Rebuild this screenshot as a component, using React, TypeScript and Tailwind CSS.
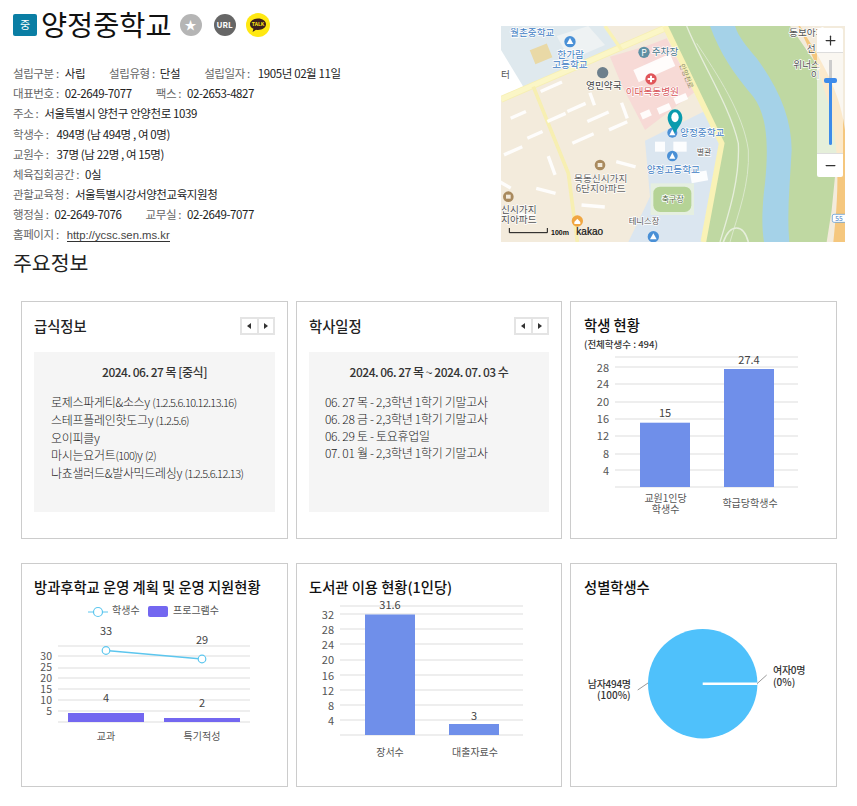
import React from "react";
import { Plus, Minus } from "lucide-react";

const FONT = "'Noto Sans CJK KR','Noto Sans',sans-serif";

function Pair({ k, v, gap = 0, mr = 0 }: { k: string; v: React.ReactNode; gap?: number; mr?: number }) {
  return (
    <span className="inline-flex whitespace-nowrap" style={{ marginRight: mr }}>
      <span className="text-[#666]">{k}</span>
      <span className="text-[#222]" style={{ marginLeft: gap }}>{v}</span>
    </span>
  );
}

function Row({ children }: { children: React.ReactNode }) {
  return <div className="flex h-[20.2px] items-center">{children}</div>;
}

function MapView() {
  const t = (x: number, y: number, s: string, c: string, size = 29, anchor: "start" | "middle" = "start") => (
    <text x={x} y={y} fill={c} fontSize={size} textAnchor={anchor} fontFamily={FONT} stroke="#fff" strokeWidth={4} paintOrder="stroke">{s}</text>
  );
  const blue = "#3f80c4";
  const dark = "#555";
  const builds: [number, number, number, number, number][] = [
    [150, 240, 70, 10, -24],[170, 330, 60, 10, -24],[230, 300, 60, 10, -24],[290, 330, 70, 10, -24],[245, 395, 70, 10, -24],
    [355, 355, 60, 10, -24],[60, 320, 50, 10, -24],[40, 430, 60, 10, -24],[110, 380, 50, 10, -24],[380, 450, 60, 10, 15],
    [170, 440, 10, 60, -20],[390, 280, 10, 50, -20],[295, 250, 10, 40, -20],[275, 580, 70, 10, 5],[140, 530, 60, 10, 15],
    [450, 310, 30, 20, -24],[500, 295, 40, 20, -24],[550, 265, 40, 20, -24],[430, 180, 120, 40, -24],[550, 395, 40, 30, 0],
    [495, 395, 30, 30, 0],[600, 490, 50, 30, -10],[85, 605, 50, 10, 10],[30, 510, 40, 10, 30],
  ];
  return (
    <svg className="block h-[216px] w-[344px]" viewBox="33 48 1032 648">
      <rect x="33" y="48" width="1032" height="648" fill="#f3ebdc" />
      <polygon points="33,48 340,48 400,110 125,225 33,260" fill="#dfe9ee" />
      <polygon points="33,120 100,230 33,265" fill="#fff" />
      <polygon points="200,78 295,48 345,105 240,150" fill="#eef2f3" />
      <rect x="125" y="110" width="55" height="45" fill="#e9d9a6" transform="rotate(-22 150 130)" />
      <polygon points="360,140 530,90 615,245 465,360 395,225" fill="#f7dad6" />
      <polygon points="440,120 530,85 555,130 470,170" fill="#f6d8d6" />
      <polygon points="465,392 640,305 695,400 640,696 415,696 480,560" fill="#dbe6f0" />
      <polygon points="525,48 900,48 1005,200 1045,400 1025,600 1010,696 640,696 695,400" fill="#bfd8a2" />
      <path d="M660 48 C690 130 730 190 790 260 C835 320 835 420 825 520 C815 600 815 650 822 696 L898 696 C890 610 900 520 905 420 C905 330 870 240 800 145 C770 110 745 80 735 48 Z" fill="#a5d2e8" />
      <path d="M590 48 C640 170 720 290 745 400 C750 500 720 600 690 696" fill="none" stroke="#e6eedb" strokeWidth="4" />
      <path d="M620 100 C680 190 760 310 775 420 C780 520 745 610 720 696" fill="none" stroke="#dbe8cc" strokeWidth="3" />
      <path d="M700 696 C720 640 760 640 775 696" fill="none" stroke="#e6eedb" strokeWidth="5" />
      <path d="M930 48 C980 130 1040 220 1060 330 L1065 360 L1065 696 L1030 696 C1050 520 1050 380 1000 230 C980 160 950 100 925 48 Z" fill="#f5c77e" />
      <polygon points="1040,48 1065,48 1065,300 1020,170" fill="#f3ebdc" />
      <path d="M33 268 L530 52" stroke="#f6efb4" strokeWidth="20" />
      <path d="M33 268 L530 52" stroke="#fbf6c6" strokeWidth="15" />
      <path d="M130 230 L235 490 L262 696" fill="none" stroke="#f7efb2" strokeWidth="11" />
      <path d="M525 48 L695 400 L640 696" fill="none" stroke="#f9f2b6" strokeWidth="17" />
      <path d="M345 48 L395 120" stroke="#f9f2b6" strokeWidth="10" />
      {builds.map(([x, y, w, h, r], i) => (
        <rect key={i} x={x} y={y} width={w} height={h} fill="#fff" opacity={0.9} transform={`rotate(${r} ${x} ${y})`} />
      ))}
      <rect x="482" y="520" width="130" height="95" fill="#e5efe0" />
      <rect x="490" y="530" width="114" height="76" rx="20" fill="#b5d396" />
      <circle cx="240" cy="95" r="17" fill="#4a90d6" />
      <polygon points="240,84 250,102 230,102" fill="#fff" />
      <circle cx="462" cy="127" r="17" fill="#5d8fa3" />
      <text x="462" y="137" fontSize="26" fill="#fff" textAnchor="middle" fontFamily={FONT}>P</text>
      <circle cx="338" cy="188" r="17" fill="#6d7f8c" />
      <circle cx="483" cy="207" r="17" fill="#e0555a" />
      <path d="M473 207 h20 M483 197 v20" stroke="#fff" strokeWidth="6" />
      <circle cx="547" cy="368" r="15" fill="#4a90d6" />
      <polygon points="547,358 556,376 538,376" fill="#fff" />
      <circle cx="547" cy="438" r="16" fill="#4a90d6" />
      <polygon points="547,428 556,446 538,446" fill="#fff" />
      <circle cx="490" cy="680" r="17" fill="#4a90d6" />
      <polygon points="490,670 500,688 480,688" fill="#fff" />
      <circle cx="330" cy="465" r="16" fill="#a98a5e" />
      <rect x="323" y="459" width="14" height="12" fill="#f3ebdc" />
      <circle cx="55" cy="560" r="16" fill="#a98a5e" />
      <rect x="48" y="554" width="14" height="12" fill="#f3ebdc" />
      <circle cx="262" cy="633" r="17" fill="#f0a640" />
      <path d="M253 636 L262 626 L271 636 V642 H253 Z" fill="#fff" />
      {t(60, 78, "월촌중학교", blue)}
      {t(242, 143, "한가람", blue, 29, "middle")}
      {t(240, 175, "고등학교", blue, 29, "middle")}
      {t(485, 135, "주차장", "#47748a")}
      {t(33, 203, "터", dark)}
      {t(288, 238, "영민약국", "#444")}
      {t(407, 256, "이대목동병원", "#d9575c")}
      {t(570, 378, "양정중학교", blue)}
      {t(620, 436, "별관", dark, 24)}
      {t(470, 488, "양정고등학교", blue)}
      {t(332, 515, "목동신시가지", "#666", 29, "middle")}
      {t(332, 545, "6단지아파드", "#666", 29, "middle")}
      {t(515, 575, "축구장", "#4f6b3e", 24)}
      {t(33, 610, "신시가지", "#555")}
      {t(33, 640, "지아파드", "#555")}
      {t(416, 641, "테니스장", "#555", 25)}
      {t(897, 77, "동보아파", "#555")}
      {t(950, 125, "선", "#555")}
      {t(910, 175, "위너스", "#555")}
      {t(962, 205, "이", "#555")}
      <text x="0" y="0" fontSize="21" fill="#8b8b6a" fontFamily={FONT} transform="translate(568 165) rotate(68)">안양천로</text>
      <rect x="1027" y="613" width="42" height="24" rx="5" fill="#fff" stroke="#4a90d6" strokeWidth="2" />
      <text x="1047" y="632" fontSize="20" fill="#3f80c4" textAnchor="middle" fontFamily={FONT}>55</text>
      <path d="M555 370 C545 350 532 340 533 322 A22 24 0 0 1 577 322 C578 340 565 350 555 370 Z" fill="#0a9bae" />
      <ellipse cx="555" cy="322" rx="11" ry="15" fill="#fff" />
      <path d="M58 654 V668 H172 V654" fill="none" stroke="#111" strokeWidth="3" />
      <text x="183" y="674" fontSize="21" fontWeight="700" fill="#111" fontFamily="'Liberation Sans',sans-serif">100m</text>
      <text x="259" y="675" fontSize="30" fontWeight="400" fill="#111" fontFamily="'Liberation Sans',sans-serif" stroke="#111" strokeWidth="0.6">kakao</text>
    </svg>
  );
}

function MapControls() {
  return (
    <div className="absolute left-[316px] top-[2px] flex h-[149px] w-[26px] flex-col overflow-hidden rounded-[2px]">
      <div className="flex h-[25px] items-center justify-center border-b border-[#ddd] bg-white">
        <Plus size={15} strokeWidth={2} className="text-[#333]" />
      </div>
      <div className="relative flex-1 bg-white/60">
        <div className="absolute left-[11.5px] top-[7px] h-[20px] w-[3px] bg-[#ccc]" />
        <div className="absolute left-[11.5px] top-[26px] h-[66px] w-[3px] rounded-b bg-[#3d8bea]" />
        <div className="absolute left-[6.5px] top-[25px] h-[5px] w-[13px] rounded-[2px] bg-[#3d8bea]" />
      </div>
      <div className="flex h-[24px] items-center justify-center border-t border-[#ddd] bg-white">
        <Minus size={15} strokeWidth={2} className="text-[#333]" />
      </div>
    </div>
  );
}

function Arrows() {
  return (
    <div className="flex h-[18px] w-[35px] border-2 border-[#e4e4e4] bg-white">
      <div className="flex flex-1 items-center justify-center border-r-2 border-[#e4e4e4]">
        <svg width="4" height="6" viewBox="0 0 4 6"><polygon points="4,0 4,6 0,3" fill="#333" /></svg>
      </div>
      <div className="flex flex-1 items-center justify-center">
        <svg width="4" height="6" viewBox="0 0 4 6"><polygon points="0,0 0,6 4,3" fill="#333" /></svg>
      </div>
    </div>
  );
}

function Card({ children, h }: { children: React.ReactNode; h: string }) {
  return <div className={`border border-[#ccc] bg-white ${h}`}>{children}</div>;
}

function Sm({ children }: { children: React.ReactNode }) {
  return <span className="text-[11px] tracking-[-0.6px]">{children}</span>;
}

function ListCard({ title, head, lines, pl }: { title: string; head: string; lines: React.ReactNode[]; pl: string }) {
  return (
    <Card h="h-[238px]">
      <div className="flex h-[50px] items-center justify-between pb-[3px] pl-[12px] pr-[12px]">
        <span className="text-[14.3px] font-medium text-[#222]">{title}</span>
        <Arrows />
      </div>
      <div className="mx-[12px] h-[160px] bg-[#f5f5f5] pt-[10px]">
        <div className="text-center text-[12px] font-medium leading-[20px] tracking-[-0.5px] text-[#333]">{head}</div>
        <div className={`mt-[11px] text-[12px] font-light leading-[17px] tracking-[-0.3px] text-[#222] ${pl}`}>
          {lines.map((l, i) => (<div key={i} className="whitespace-nowrap">{l}</div>))}
        </div>
      </div>
    </Card>
  );
}

type Bar = { x0: number; x1: number; top: number; label: string; ly: number; lx: number };

function Bars({ ox, oy, h, grid, ticks, x0, x1, base, bars, cats }: {
  ox: number; oy: number; h: number; grid: number[]; ticks: [string, number][]; x0: number; x1: number; base: number; bars: Bar[];
  cats: [string, number, number][];
}) {
  return (
    <svg className="block w-[265px] overflow-visible" style={{ height: h }} viewBox={`${ox} ${oy} 265 ${h}`} fontFamily={FONT}>
      {grid.map((y) => (<line key={y} x1={x0} x2={x1} y1={y} y2={y} stroke="#ddd" strokeWidth="1" />))}
      {bars.map((b) => (<rect key={b.label} x={b.x0} y={b.top} width={b.x1 - b.x0} height={base - b.top} fill="#6f8fea" />))}
      {bars.map((b) => (<text key={b.label} x={b.lx} y={b.ly} fontSize="11" fill="#444" textAnchor="middle">{b.label}</text>))}
      {ticks.map(([s, y]) => (<text key={s} x={x0 - 6} y={y + 4} fontSize="11" fill="#555" textAnchor="end">{s}</text>))}
      {cats.map(([s, x, y]) => (<text key={s + y} x={x} y={y + 3.5} fontSize="10" fill="#555" textAnchor="middle">{s}</text>))}
    </svg>
  );
}

function ChartTitle({ children, pl = "pl-[12px]" }: { children: React.ReactNode; pl?: string }) {
  return <div className={`whitespace-nowrap pt-[12px] text-[14.3px] font-medium leading-[22px] text-[#111] ${pl}`}>{children}</div>;
}

function ComboChart() {
  const grid = [646, 656, 668, 678, 689, 700, 711, 722];
  return (
    <svg className="block h-[172px] w-[265px]" viewBox="22 598 265 172" fontFamily={FONT}>
      <line x1="88" x2="108" y1="612" y2="612" stroke="#5cc6ee" strokeWidth="1" />
      <circle cx="98" cy="612" r="4.5" fill="#fff" stroke="#5cc6ee" strokeWidth="1.2" />
      <text x="112" y="614" fontSize="10" fill="#555">학생수</text>
      <rect x="148" y="606" width="20" height="11" rx="2" fill="#7367f0" />
      <text x="173" y="614" fontSize="10" fill="#555">프로그램수</text>
      {grid.map((y) => (<line key={y} x1="58" x2="250" y1={y} y2={y} stroke="#ddd" strokeWidth="1" />))}
      <rect x="68" y="713" width="76" height="9" fill="#7367f0" />
      <rect x="164" y="718" width="76" height="4" fill="#7367f0" />
      <line x1="106" y1="650.5" x2="202" y2="659" stroke="#5cc6ee" strokeWidth="1.4" />
      <circle cx="106" cy="650.5" r="3.8" fill="#fff" stroke="#5cc6ee" strokeWidth="1.2" />
      <circle cx="202" cy="659" r="3.8" fill="#fff" stroke="#5cc6ee" strokeWidth="1.2" />
      {([["33", 106, 635], ["29", 202, 644], ["4", 106, 702], ["2", 202, 707]] as [string, number, number][]).map(([s, x, y]) => (
        <text key={s} x={x} y={y} fontSize="11" fill="#444" textAnchor="middle">{s}</text>
      ))}
      {([["30", 660], ["25", 671], ["20", 682], ["15", 693], ["10", 704], ["5", 715]] as [string, number][]).map(([s, y]) => (
        <text key={s} x="52" y={y} fontSize="10.5" fill="#555" textAnchor="end">{s}</text>
      ))}
      <text x="106" y="740" fontSize="10" fill="#555" textAnchor="middle">교과</text>
      <text x="202" y="740" fontSize="10" fill="#555" textAnchor="middle">특기적성</text>
    </svg>
  );
}

function PieChart() {
  return (
    <svg className="block h-[172px] w-[265px]" viewBox="571 598 265 172" fontFamily={FONT}>
      <circle cx="702.7" cy="683.7" r="54.7" fill="#4fc1fb" />
      <line x1="702.7" x2="757.4" y1="683.7" y2="683.7" stroke="#fff" strokeWidth="2.5" />
      <polyline points="757,683.7 766.7,675" fill="none" stroke="#999" strokeWidth="1" />
      <polyline points="648,683 637.7,690" fill="none" stroke="#999" strokeWidth="1" />
      <text x="773" y="674" fontSize="10" fontWeight="500" fill="#333" letterSpacing="-0.3">여자0명</text>
      <text x="773" y="686" fontSize="10" fontWeight="500" fill="#333">(0%)</text>
      <text x="630.7" y="688" fontSize="10" fontWeight="500" fill="#333" textAnchor="end" letterSpacing="-0.3">남자494명</text>
      <text x="630.7" y="699" fontSize="10" fontWeight="500" fill="#333" textAnchor="end">(100%)</text>
    </svg>
  );
}

export default function App() {
  return (
    <div className="h-[806px] w-[857px] overflow-hidden bg-white" style={{ fontFamily: FONT }}>
      <div className="flex h-[242px] pl-[13px]">
        <div className="w-[488px]">
          <div className="flex h-[50px] items-center pb-[1px]">
            <div className="mr-[4px] flex h-[22px] w-[24px] items-center justify-center rounded-[2px] bg-[#0a7ea4] text-[11px] text-white">중</div>
            <span className="text-[28.4px] font-normal leading-none text-[#111]">양정중학교</span>
            <div className="ml-[8px] flex h-[22px] w-[22px] items-center justify-center rounded-full bg-[#b5b5b5] text-[12px] leading-none text-white">★</div>
            <div className="ml-[12px] flex h-[22px] w-[22px] items-center justify-center rounded-full bg-[#666] text-[8px] font-bold leading-none text-white">URL</div>
            <div className="ml-[10px] h-[24px] w-[24px]">
              <svg viewBox="0 0 24 24" className="h-[24px] w-[24px]">
                <circle cx="12" cy="12" r="12" fill="#ffe812" />
                <path d="M12 5.500C7.400 5.500 4 8 4 11.200c0 2 1.400 3.600 3.400 4.600L6.600 19l3.400-2.300c.7.1 1.300.2 2 .2 4.600 0 8-2.500 8-5.700S16.600 5.500 12 5.500Z" fill="#3b1e1e" />
                <text x="12" y="13" fontSize="5" fontWeight="700" fill="#ffe812" textAnchor="middle">TALK</text>
              </svg>
            </div>
          </div>
          <div className="mt-[13px] text-[11.5px] leading-[20px] tracking-[-0.4px]">
            <Row><Pair k="설립구분 :" v="사립" gap={6} mr={24} /><Pair k="설립유형 :" v="단설" gap={5} mr={24} /><Pair k="설립일자 :" v="1905년 02월 11일" gap={8} /></Row>
            <Row><Pair k="대표번호 :" v="02-2649-7077" gap={6} mr={24} /><Pair k="팩스 :" v="02-2653-4827" gap={6} /></Row>
            <Row><Pair k="주소 :" v="서울특별시 양천구 안양천로 1039" gap={6} /></Row>
            <Row><Pair k="학생수 :" v="494명 (남 494명 , 여 0명)" gap={8} /></Row>
            <Row><Pair k="교원수 :" v="37명 (남 22명 , 여 15명)" gap={8} /></Row>
            <Row><Pair k="체육집회공간 :" v="0실" gap={6} /></Row>
            <Row><Pair k="관할교육청 :" v="서울특별시강서양천교육지원청" gap={6} /></Row>
            <Row><Pair k="행정실 :" v="02-2649-7076" gap={6} mr={24} /><Pair k="교무실 :" v="02-2649-7077" gap={6} /></Row>
            <Row><Pair k="홈페이지 :" v={<span className="border-b border-[#333] font-['Liberation_Sans',sans-serif] text-[11.3px] tracking-normal text-[#444]">http://ycsc.sen.ms.kr</span>} gap={8} /></Row>
          </div>
        </div>
        <div className="relative mt-[26px] h-[216px] w-[344px]">
          <MapView />
          <MapControls />
        </div>
      </div>
      <div className="flex h-[40px] items-center pl-[13px] text-[20.5px] leading-none text-[#222]">주요정보</div>
      <div className="ml-[21px] mt-[19px] grid w-[816px] grid-cols-[267px_266px_267px] gap-x-[8px] gap-y-[24px]">
        <ListCard
          title="급식정보"
          head="2024. 06. 27 목 [중식]"
          pl="pl-[17px]"
          lines={[
            <>로제스파게티&소스y <Sm>(1.2.5.6.10.12.13.16)</Sm></>,
            <>스테프플레인핫도그y <Sm>(1.2.5.6)</Sm></>,
            <>오이피클y</>,
            <>마시는요거트<Sm>(100)</Sm>y <Sm>(2)</Sm></>,
            <>나쵸샐러드&발사믹드레싱y <Sm>(1.2.5.6.12.13)</Sm></>,
          ]}
        />
        <ListCard
          title="학사일정"
          head="2024. 06. 27 목 ~ 2024. 07. 03 수"
          pl="pl-[16px]"
          lines={["06. 27 목 - 2,3학년 1학기 기말고사", "06. 28 금 - 2,3학년 1학기 기말고사", "06. 29 토 - 토요휴업일", "07. 01 월 - 2,3학년 1학기 기말고사"]}
        />
        <Card h="h-[238px]">
          <ChartTitle pl="pl-[13px]">학생 현황</ChartTitle>
          <div className="pl-[13px] text-[9.5px] font-medium leading-[16px] text-[#333]">(전체학생수 : 494)</div>
          <Bars
            ox={571} oy={352} h={170}
            grid={[357, 367, 384, 402, 419, 436, 454, 470, 487]}
            ticks={[["28", 368], ["24", 384], ["20", 402], ["16", 419], ["12", 436], ["8", 454], ["4", 471]]}
            x0={615} x1={798} base={487}
            bars={[
              { x0: 640, x1: 690, top: 422.7, label: "15", lx: 665, ly: 417 },
              { x0: 724, x1: 774, top: 369, label: "27.4", lx: 749, ly: 364 },
            ]}
            cats={[["교원1인당", 665.6, 498], ["학생수", 665.6, 509], ["학급당학생수", 750, 503]]}
          />
        </Card>
        <Card h="h-[224px]">
          <ChartTitle>방과후학교 운영 계획 및 운영 지원현황</ChartTitle>
          <ComboChart />
        </Card>
        <Card h="h-[224px]">
          <ChartTitle>도서관 이용 현황(1인당)</ChartTitle>
          <Bars
            ox={297} oy={598} h={172}
            grid={[606, 614, 629, 644, 660, 675, 690, 705, 720, 735]}
            ticks={[["32", 615], ["28", 630], ["24", 645], ["20", 660], ["16", 676], ["12", 691], ["8", 706], ["4", 721]]}
            x0={340} x1={523} base={735}
            bars={[
              { x0: 365, x1: 415, top: 614.5, label: "31.6", lx: 390, ly: 609 },
              { x0: 449, x1: 499, top: 724, label: "3", lx: 474, ly: 720 },
            ]}
            cats={[["장서수", 390, 752], ["대출자료수", 475, 752]]}
          />
        </Card>
        <Card h="h-[224px]">
          <ChartTitle pl="pl-[13px]">성별학생수</ChartTitle>
          <PieChart />
        </Card>
      </div>
    </div>
  );
}
